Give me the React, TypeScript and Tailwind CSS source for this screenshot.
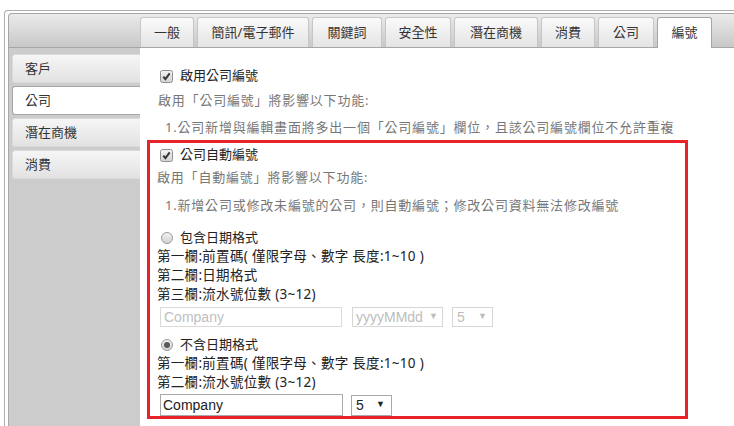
import React from "react";

const font = "font-['Noto_Sans','Noto_Sans_CJK_TC',sans-serif]";

const tabs = [
  { label: "一般", w: "w-[54px]" },
  { label: "簡訊/電子郵件", w: "w-[112px]" },
  { label: "關鍵詞", w: "w-[70px]" },
  { label: "安全性", w: "w-[66px]" },
  { label: "潛在商機", w: "w-[84px]" },
  { label: "消費", w: "w-[54px]" },
  { label: "公司", w: "w-[56px]" },
];

const sideItems = ["客戶", "公司", "潛在商機", "消費"];

function CheckBox() {
  return (
    <svg width="13" height="13" viewBox="0 0 13 13" className="shrink-0">
      <defs>
        <linearGradient id="cbg" x1="0" y1="0" x2="0" y2="1">
          <stop offset="0" stopColor="#f3f3f3" />
          <stop offset="1" stopColor="#d2d2d2" />
        </linearGradient>
      </defs>
      <rect x="0.5" y="0.5" width="12" height="12" rx="2" fill="url(#cbg)" stroke="#909090" />
      <path d="M3.3 6.6 L5.4 9.1 L9.7 3.4" fill="none" stroke="#363636" strokeWidth="2" />
    </svg>
  );
}

function Radio({ checked }: { checked?: boolean }) {
  return (
    <svg width="12" height="12" viewBox="0 0 12 12" className="shrink-0">
      <defs>
        <linearGradient id="rbg" x1="0" y1="0" x2="0" y2="1">
          <stop offset="0" stopColor="#f4f4f4" />
          <stop offset="1" stopColor="#cfcfcf" />
        </linearGradient>
      </defs>
      <circle cx="6" cy="6" r="5.5" fill="url(#rbg)" stroke="#9c9c9c" />
      {checked && <circle cx="6" cy="6" r="3" fill="#5a5a5a" />}
    </svg>
  );
}

function Row({ children }: { children: React.ReactNode }) {
  return (
    <div className="h-[19px] leading-[19px] text-[13.5px] tracking-[0.3px] whitespace-nowrap">
      {children}
    </div>
  );
}

export default function App() {
  return (
    <div className={`w-[734px] h-[426px] overflow-hidden bg-white text-[13px] text-[#222] ${font}`}>
      <div className="ml-[4px] mt-[10px] h-[416px] flex flex-col border-l border-t border-[#acacac] rounded-tl-[4px] pl-[3px] pt-[2px]">
        <div className="h-[35px] shrink-0 flex items-end gap-[3px] pl-[131px] border-l border-t border-b border-[#a6a6a6] rounded-tl-[4px] bg-gradient-to-b from-[#ebebeb] to-[#c8c8c8]">
          {tabs.map((t) => (
            <div
              key={t.label}
              className={`${t.w} h-[30px] shrink-0 flex items-center justify-center text-[#333] border border-b-0 border-[#c6c6c6] rounded-t-[3px] bg-gradient-to-b from-[#fafafa] to-[#e4e4e4]`}
            >
              {t.label}
            </div>
          ))}
          <div className="w-[55px] h-[31px] mb-[-1px] shrink-0 flex items-center justify-center text-[#333] border border-b-0 border-[#a6a6a6] rounded-t-[3px] bg-white">
            編號
          </div>
        </div>

        <div className="flex flex-1 min-h-0">
          <div className="w-[132px] shrink-0 flex flex-col gap-[3px] bg-[#cccccc] border-l border-[#a8a8a8] pl-[3px] pt-[6px]">
            {sideItems.map((s, i) =>
              i === 1 ? (
                <div
                  key={s}
                  className="h-[29px] flex items-center pl-[12px] text-[#333] bg-white border border-r-0 border-[#a6a6a6] rounded-l-[3px]"
                >
                  {s}
                </div>
              ) : (
                <div
                  key={s}
                  className="h-[29px] flex items-center pl-[12px] text-[#333] border border-r-0 border-[#dadada] rounded-l-[3px] bg-gradient-to-b from-[#f6f6f6] to-[#e2e2e2]"
                >
                  {s}
                </div>
              )
            )}
          </div>

          <div className="flex-1 pl-[7px]">
            <div className="pl-[11px]">
              <div className="mt-[18px] h-[20px] flex items-center gap-[7px] ml-[2px]">
                <CheckBox />
                <span>啟用公司編號</span>
              </div>
              <div className="mt-[4px] h-[20px] leading-[20px] text-[#777] tracking-[0.8px] whitespace-nowrap">
                啟用「公司編號」將影響以下功能:
              </div>
              <div className="mt-[7px] h-[20px] leading-[20px] pl-[7px] text-[#777] tracking-[0.8px] whitespace-nowrap">
                1.公司新增與編輯畫面將多出一個「公司編號」欄位，且該公司編號欄位不允許重複
              </div>
            </div>

            <div className="mt-[3px] w-[541px] border-[3px] border-[#e8222b] pl-[7px] pt-[2px]">
              <div className="h-[20px] flex items-center gap-[7px] ml-[3px]">
                <CheckBox />
                <span>公司自動編號</span>
              </div>
              <div className="mt-[2px] h-[20px] leading-[20px] text-[#777] tracking-[0.8px] whitespace-nowrap">
                啟用「自動編號」將影響以下功能:
              </div>
              <div className="mt-[8px] h-[20px] leading-[20px] pl-[8px] text-[#777] tracking-[0.8px] whitespace-nowrap">
                1.新增公司或修改未編號的公司，則自動編號；修改公司資料無法修改編號
              </div>

              <div className="mt-[13px] h-[19px] flex items-center gap-[7px] ml-[4px]">
                <Radio />
                <span>包含日期格式</span>
              </div>
              <Row>第一欄:前置碼( 僅限字母、數字 長度:1~10 )</Row>
              <Row>第二欄:日期格式</Row>
              <Row>第三欄:流水號位數 (3~12)</Row>
              <div className="mt-[3px] ml-[3px] flex items-center font-['Liberation_Sans',sans-serif] text-[14px]">
                <input
                  disabled
                  placeholder="Company"
                  className="w-[182px] h-[20px] px-[3px] border border-[#d9d9d9] bg-white placeholder:text-[#c0c0c0] outline-none"
                />
                <div className="ml-[10px] w-[91px] h-[20px] flex items-center justify-between pl-[3px] pr-[4px] border border-[#d6d6d6] text-[#bdbdbd]">
                  <span>yyyyMMdd</span>
                  <span className="text-[9px]">▼</span>
                </div>
                <div className="ml-[9px] w-[41px] h-[20px] flex items-center justify-between pl-[4px] pr-[5px] border border-[#d6d6d6] text-[#bdbdbd]">
                  <span>5</span>
                  <span className="text-[9px]">▼</span>
                </div>
              </div>

              <div className="mt-[8px] h-[19px] flex items-center gap-[7px] ml-[4px]">
                <Radio checked />
                <span>不含日期格式</span>
              </div>
              <Row>第一欄:前置碼( 僅限字母、數字 長度:1~10 )</Row>
              <Row>第二欄:流水號位數 (3~12)</Row>
              <div className="mt-[2px] ml-[3px] flex items-center font-['Liberation_Sans',sans-serif] text-[14px]">
                <input
                  defaultValue="Company"
                  className="w-[183px] h-[22px] px-[2px] border border-[#a9a9a9] bg-white text-[#222] outline-none"
                />
                <div className="ml-[8px] w-[41px] h-[21px] flex items-center justify-between pl-[4px] pr-[6px] border border-[#a9a9a9] text-[#222]">
                  <span>5</span>
                  <span className="text-[9px]">▼</span>
                </div>
              </div>
            </div>
          </div>
        </div>
      </div>
    </div>
  );
}
